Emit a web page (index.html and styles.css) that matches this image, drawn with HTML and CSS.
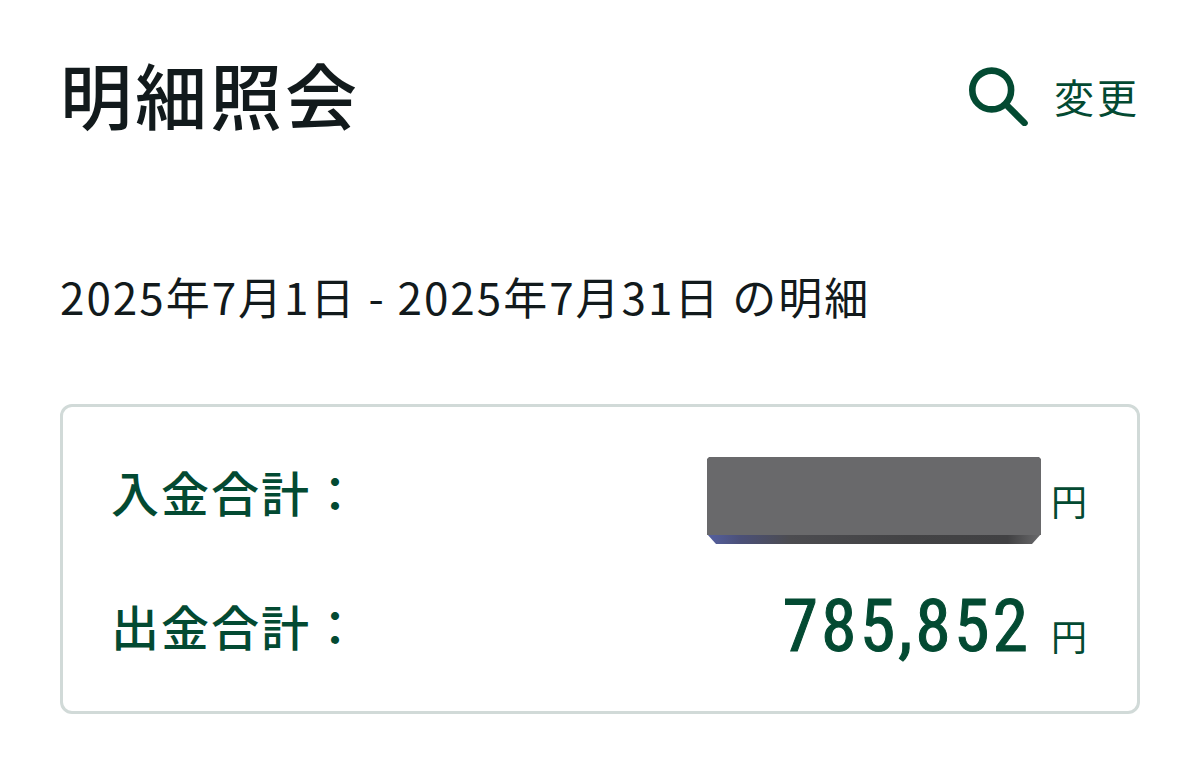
FILE: index.html
```html
<!DOCTYPE html>
<html lang="ja">
<head>
    <meta charset="UTF-8">
    <meta name="viewport" content="width=device-width, initial-scale=1.0">
    <title>明細照会</title>
    <link rel="stylesheet" href="styles.css">
</head>
<body>

<!-- Main Container -->
<main class="container">

    <!-- Title and search button -->
    <header class="header">
        <h1>明細照会</h1>
        <button type="button" class="change">
            <svg class="icon" viewBox="0 0 60 60" aria-hidden="true">
                <circle cx="23.7" cy="24" r="19.4"></circle>
                <path d="M38 38.5 L56.5 57"></path>
            </svg>
            <span>変更</span>
        </button>
    </header>

    <p class="period">2025年7月1日 - 2025年7月31日 の明細</p>

    <!-- Totals -->
    <dl class="summary">
        <div class="row">
            <dt>入金合計：</dt>
            <dd class="hidden-amount">
                <svg class="mask" viewBox="0 0 334 88" role="img" aria-label="非表示">
                    <defs>
                        <linearGradient id="edge">
                            <stop offset="0" stop-color="#5560a0"></stop>
                            <stop offset="0.1" stop-color="#4b5078"></stop>
                            <stop offset="0.25" stop-color="#4c4c50"></stop>
                            <stop offset="0.6" stop-color="#434345"></stop>
                            <stop offset="0.9" stop-color="#414143"></stop>
                            <stop offset="1" stop-color="#6a6a6c"></stop>
                        </linearGradient>
                    </defs>
                    <path d="M0 78 H334 L325 88 H9 Z" fill="url(#edge)"></path>
                    <path d="M2 1 H332 L334 3 V79 H0 V3 Z" fill="#69696b"></path>
                </svg>
                <span class="unit">円</span>
            </dd>
        </div>
        <div class="row">
            <dt>出金合計：</dt>
            <dd>
                <span class="amount">785,852</span>
                <span class="unit">円</span>
            </dd>
        </div>
    </dl>
</main>

</body>
</html>
```
FILE: styles.css
```css
* {
    box-sizing: border-box;
}

body {
    margin: 0;
    background-color: #ffffff;
    color: #121a1c;
    font-family: "Noto Sans CJK JP", sans-serif;
}

/* Main Container Styling */
.container {
    padding: 36px 60px 64px;
}

.header {
    display: flex;
    justify-content: space-between;
    align-items: center;
}

h1 {
    margin: 0;
    font-size: 72px;
    font-weight: 500;
    line-height: 114px;
    letter-spacing: 3px;
}

/* Search Button */
.change {
    display: flex;
    align-items: center;
    gap: 26px;
    padding: 6px 0 0;
    border: none;
    background: none;
    color: #034a32;
    font-family: inherit;
    font-size: 40px;
    line-height: 60px;
    letter-spacing: 3px;
    cursor: pointer;
}

.icon {
    width: 60px;
    height: 60px;
    fill: none;
    stroke: currentColor;
    stroke-width: 6.6;
    stroke-linecap: round;
}

.period {
    margin: 112px 0 74px;
    font-size: 44px;
    line-height: 68px;
    letter-spacing: 2px;
}

/* Totals Box */
.summary {
    display: grid;
    gap: 46px;
    margin: 0;
    padding: 49px 50px 46px 48px;
    border: 3px solid #d1dad8;
    border-radius: 12px;
    color: #034a32;
}

.row {
    display: flex;
    justify-content: space-between;
    align-items: flex-start;
}

dt {
    font-size: 48px;
    font-weight: 500;
    line-height: 70px;
    letter-spacing: 2px;
}

dd {
    display: flex;
    align-items: baseline;
    gap: 20px;
    margin: 0;
}

.hidden-amount {
    align-items: center;
    gap: 10px;
}

.mask {
    width: 334px;
    height: 88px;
}

.amount {
    font-family: "Roboto Condensed", Roboto, sans-serif;
    font-size: 72px;
    font-weight: 400;
    line-height: 74px;
    letter-spacing: 3px;
    -webkit-text-stroke: 1px currentColor;
}

.unit {
    font-size: 36px;
    line-height: 60px;
}
```
